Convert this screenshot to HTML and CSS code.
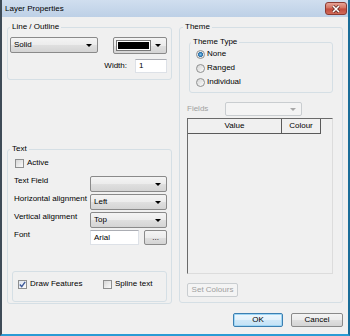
FILE: index.html
```html
<!DOCTYPE html>
<html lang="en">

<head>
  <meta charset="UTF-8">
  <meta name="viewport" content="width=device-width, initial-scale=1.0">
  <title>Layer Properties</title>
  <link rel="stylesheet" href="styles.css">
</head>

<body>
  <div class="window">
    <!-- title bar -->
    <div class="titlebar">
      <span class="title">Layer Properties</span>
      <span class="close-btn">
        <svg width="10" height="8" viewBox="0 0 10 8">
          <path d="M2 1 L8 7 M8 1 L2 7" stroke="#5a2620" stroke-width="3" />
          <path d="M2 1 L8 7 M8 1 L2 7" stroke="#fff" stroke-width="1.6" />
        </svg>
      </span>
    </div>

    <div class="dialog">
      <div class="columns">
        <!-- left column -->
        <div class="col-left">
          <fieldset class="group line-group">
            <legend>Line / Outline</legend>
            <div class="line-row">
              <div class="combo combo-solid"><span>Solid</span><i class="arrow"></i></div>
              <div class="colour-btn"><span class="swatch"></span><i class="arrow"></i></div>
            </div>
            <div class="width-row">
              <span>Width:</span>
              <div class="textbox width-box">1</div>
            </div>
          </fieldset>

          <fieldset class="group text-group">
            <legend>Text</legend>
            <label class="check active-check"><span class="box"></span>Active</label>
            <div class="form-grid">
              <span class="form-label">Text Field</span>
              <div class="combo"><span></span><i class="arrow"></i></div>
              <span class="form-label">Horizontal alignment</span>
              <div class="combo"><span>Left</span><i class="arrow"></i></div>
              <span class="form-label">Vertical alignment</span>
              <div class="combo"><span>Top</span><i class="arrow"></i></div>
              <span class="form-label">Font</span>
              <div class="font-row">
                <div class="textbox font-box">Arial</div>
                <div class="btn dots-btn">...</div>
              </div>
            </div>
            <div class="options-box">
              <label class="check draw-check">
                <span class="box checked">
                  <svg width="7" height="7" viewBox="0 0 7 7">
                    <path d="M0.8 3.6 L2.7 5.6 L6.2 0.8" fill="none" stroke="#3d5a9a" stroke-width="1.4" />
                  </svg>
                </span>Draw Features
              </label>
              <label class="check"><span class="box"></span>Spline text</label>
            </div>
          </fieldset>
        </div>

        <!-- right column -->
        <fieldset class="group theme-group">
          <legend>Theme</legend>
          <fieldset class="group type-group">
            <legend>Theme Type</legend>
            <label class="radio-row"><span class="radio selected"></span>None</label>
            <label class="radio-row"><span class="radio"></span>Ranged</label>
            <label class="radio-row"><span class="radio"></span>Individual</label>
          </fieldset>
          <div class="fields-row">
            <span class="disabled-text">Fields</span>
            <div class="combo combo-disabled"><span></span><i class="arrow"></i></div>
          </div>
          <div class="list">
            <div class="list-header">
              <div class="col-value">Value</div>
              <div class="col-colour">Colour</div>
            </div>
          </div>
          <div class="btn btn-disabled set-colours">Set Colours</div>
        </fieldset>
      </div>

      <div class="footer">
        <div class="btn btn-default ok-btn">OK</div>
        <div class="btn cancel-btn">Cancel</div>
      </div>
    </div>
  </div>
</body>

</html>
```

FILE: styles.css
```css
/* base */
* {
  box-sizing: border-box;
}

body {
  margin: 0;
  font-family: "Liberation Sans", Arial, sans-serif;
  font-size: 8px;
  line-height: 10px;
  color: #000;
  background-color: #f0f0f0;
}

/* window frame */
.window {
  width: 350px;
  height: 336px;
  display: flex;
  flex-direction: column;
  background-color: #f0f0f0;
  border-left: 2px solid #3e4b57;
  border-right: 2px solid #1a6d99;
  border-bottom: 2px solid #2a9bd4;
}

.titlebar {
  height: 17px;
  display: flex;
  align-items: center;
  justify-content: space-between;
  padding: 0 1px 0 3px;
  background: linear-gradient(#d0deef, #bdd0e6);
}

.close-btn {
  width: 22px;
  height: 13px;
  display: flex;
  align-items: center;
  justify-content: center;
  border: 1px solid #8b3a32;
  border-radius: 3px;
  background: linear-gradient(#e6a396, #d2705f 48%, #c24a3c 52%, #d06a58);
}

.dialog {
  flex: 1;
  padding: 5px 5px 0 5px;
}

.columns {
  display: grid;
  grid-template-columns: 165px 164px;
  column-gap: 7px;
  align-items: start;
}

/* group boxes */
.group {
  margin: 0;
  min-width: 0;
  padding: 0 2px;
  border: 1px solid #d5dfe5;
  border-radius: 3px;
}

.group legend {
  padding: 0 2px;
  line-height: 10px;
}

/* line / outline */
.line-group {
  padding: 5px 3px 6px 2px;
}

.line-row {
  display: flex;
  align-items: flex-start;
}

.combo {
  height: 16px;
  display: flex;
  align-items: center;
  justify-content: space-between;
  padding: 0 5px 0 3px;
  border: 1px solid #8a8a8a;
  border-radius: 2px;
  background: linear-gradient(#f4f4f4, #ececec 50%, #e0e0e0 50%, #d4d4d4);
}

.arrow {
  width: 0;
  height: 0;
  border-left: 3px solid transparent;
  border-right: 3px solid transparent;
  border-top: 3px solid #000;
}

.combo-solid {
  width: 88px;
}

.colour-btn {
  width: 54px;
  height: 17px;
  margin-left: 15px;
  display: flex;
  align-items: center;
  padding: 0 4px 0 3px;
  gap: 5px;
  border: 1px solid #8a8a8a;
  border-radius: 2px;
  background: linear-gradient(#f4f4f4, #ececec 50%, #e0e0e0 50%, #d4d4d4);
}

.swatch {
  width: 33px;
  height: 9px;
  background-color: #000;
  border: 1px solid #fff;
  outline: 1px solid #777;
}

.width-row {
  margin-top: 5px;
  display: flex;
  justify-content: flex-end;
  align-items: center;
  gap: 8px;
  padding-right: 1px;
}

.textbox {
  height: 14px;
  padding: 0 3px;
  display: flex;
  align-items: center;
  background-color: #fff;
  border: 1px solid #dde1e7;
  border-top-color: #abadb3;
}

.width-box {
  width: 32px;
}

/* text group */
.text-group {
  margin-top: 64px;
  padding: 4px 2px 1px 2px;
}

.check {
  display: flex;
  align-items: center;
  gap: 3px;
  height: 10px;
}

.box {
  width: 9px;
  height: 9px;
  display: flex;
  align-items: center;
  justify-content: center;
  border: 1px solid #8e8f8f;
  background: linear-gradient(135deg, #d6d6d6, #fbfbfb);
}

.box.checked {
  background: linear-gradient(135deg, #dfe6f0, #fbfbfb);
}

.active-check {
  margin-left: 5px;
}

.form-grid {
  margin-top: 8px;
  padding-left: 4px;
  display: grid;
  grid-template-columns: 76px 77px;
  grid-auto-rows: 16px;
  row-gap: 2px;
}

.form-label {
  align-self: start;
  white-space: nowrap;
}

.font-row {
  display: flex;
  gap: 5px;
}

.font-box {
  width: 50px;
  height: 15px;
}

.btn {
  display: flex;
  align-items: center;
  justify-content: center;
  height: 14px;
  border: 1px solid #8a8a8a;
  border-radius: 2px;
  background: linear-gradient(#f4f4f4, #ececec 50%, #e0e0e0 50%, #d4d4d4);
}

.dots-btn {
  width: 23px;
  height: 15px;
}

.options-box {
  margin: 25px 0 0 2px;
  width: 155px;
  height: 31px;
  padding: 7px 0 0 5px;
  display: grid;
  grid-template-columns: 85px auto;
  align-items: start;
  border: 1px solid #d5dfe5;
  border-radius: 3px;
}

/* theme group */
.theme-group {
  padding: 5px 3px 5px 3px;
}

.type-group {
  margin-left: 6px;
  width: 144px;
  padding: 2px 2px 5px 1px;
}

.radio-row {
  display: flex;
  align-items: center;
  gap: 2px;
  height: 10px;
  margin-left: 5px;
  margin-bottom: 4px;
}

.radio-row:last-child {
  margin-bottom: 0;
}

.radio {
  width: 9px;
  height: 9px;
  border-radius: 50%;
  border: 1px solid #8e8f8f;
  background: linear-gradient(135deg, #d6d6d6, #fbfbfb);
}

.radio.selected {
  background: radial-gradient(circle, #7cc4ee 0, #2a6fa8 2.2px, #e4e4e4 2.8px, #f8f8f8);
}

.fields-row {
  margin: 9px 0 0 4px;
  display: flex;
  align-items: center;
}

.disabled-text {
  width: 38px;
  color: #a0a0a0;
}

.combo-disabled {
  width: 77px;
  height: 14px;
  border-color: #c9cdd0;
  background: #f4f4f4;
}

.combo-disabled .arrow {
  border-top-color: #a8a8a8;
}

.list {
  margin: 2px 0 0 4px;
  width: 146px;
  height: 156px;
  border: 1px solid #dcdcdc;
  border-left-color: #6a6a6a;
  border-top-color: #6a6a6a;
}

.list-header {
  display: flex;
  height: 15px;
}

.list-header div {
  display: flex;
  align-items: center;
  justify-content: center;
  border-right: 1px solid #5a5a5a;
  border-bottom: 1px solid #5a5a5a;
}

.col-value {
  width: 94px;
}

.col-colour {
  width: 39px;
}

.set-colours {
  margin: 9px 0 0 4px;
  width: 51px;
}

.btn-disabled {
  color: #a0a0a0;
  border-color: #c9cdd0;
  background: #f4f4f4;
}

/* bottom buttons */
.footer {
  margin-top: 9px;
  display: flex;
  justify-content: flex-end;
  gap: 8px;
}

.ok-btn {
  width: 50px;
}

.cancel-btn {
  width: 52px;
}

.btn-default {
  border-color: #3c7fb1;
  box-shadow: inset 0 0 0 1px #9fd6f5;
  background: linear-gradient(#eef7fd, #e2f1fb 50%, #cfe8f8 50%, #c4e2f6);
}
```
